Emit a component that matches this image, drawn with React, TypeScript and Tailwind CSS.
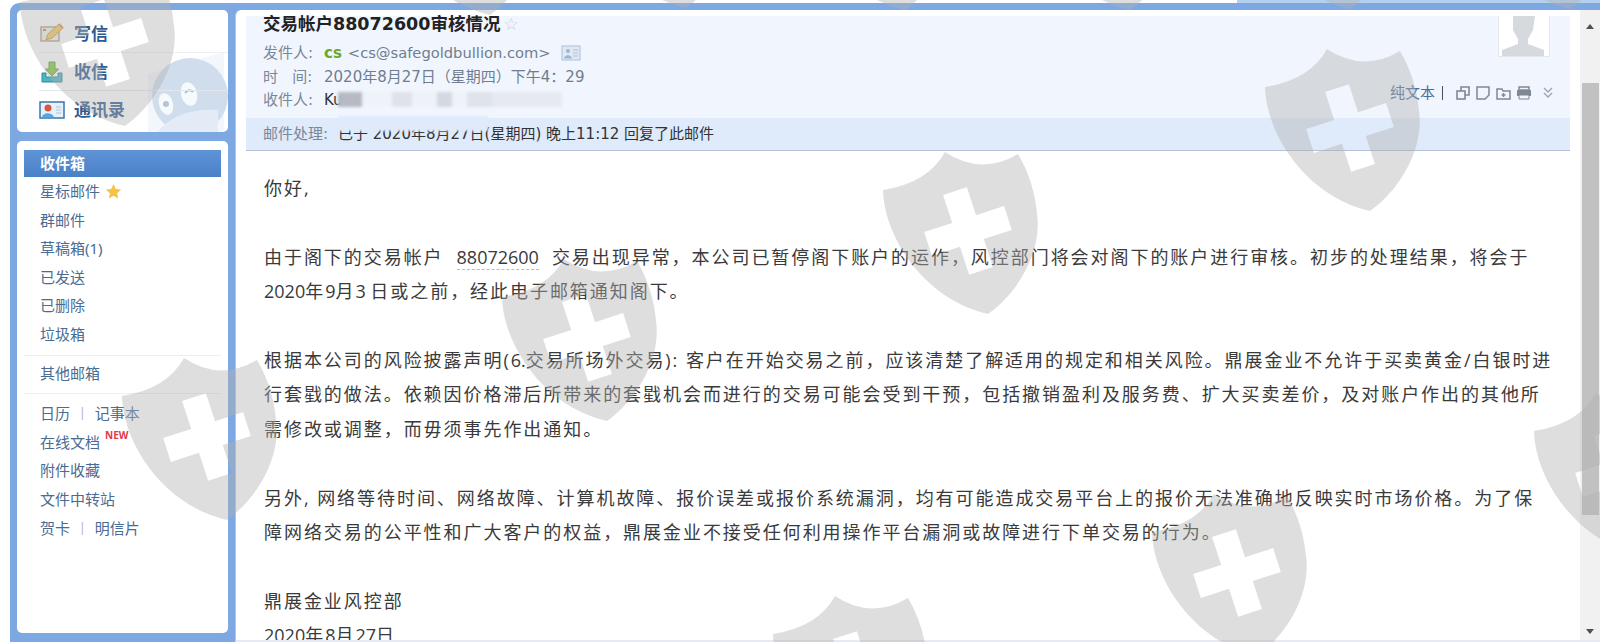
const shields: [number, number][] = [
  [105, 43], [968, 231], [587, 338], [207, 437], [1350, 128], [1619, 472], [1237, 573], [858, 675],
  [470, -68], [666, -75], [885, -73], [1110, -73], [1330, -74], [1550, -74],
];

// plus sign turned by the shield's tilt, cut out of the shield path
const crossPoints: [number, number][] = [
  [-12.5, -42], [12.5, -42], [12.5, -12.5], [42, -12.5], [42, 12.5], [12.5, 12.5],
  [12.5, 42], [-12.5, 42], [-12.5, 12.5], [-42, 12.5], [-42, -12.5], [-12.5, -12.5],
];
const tilt = (-18 * Math.PI) / 180;
const cross =
  "M" +
  crossPoints
    .map(([x, y]) => `${(x * Math.cos(tilt) - y * Math.sin(tilt)).toFixed(1)} ${(x * Math.sin(tilt) + y * Math.cos(tilt)).toFixed(1)}`)
    .join("L") +
  "Z";
const shieldPath = `M-23 -79 Q-40 -48 -85 -41 C-84 5 -45 68 20 83 C55 58 74 15 69 -17 Q66 -50 50 -77 Q13 -55 -23 -79Z${cross}`;

function Watermarks() {
  return (
    <svg aria-hidden="true" className="pointer-events-none absolute inset-0 h-[642px] w-[1600px]" viewBox="0 0 1600 642">
      {shields.map(([x, y]) => (
        <path key={`${x}-${y}`} transform={`translate(${x} ${y})`} d={shieldPath} fillRule="evenodd" fill="#b0b0b0" fillOpacity="0.42" />
      ))}
    </svg>
  );
}

function ComposeIcon() {
  return (
    <svg viewBox="0 0 26 24" className="h-[24px] w-[26px]" aria-hidden="true">
      <rect x="2" y="5" width="18" height="14" fill="#f3efe6" stroke="#a08d83" strokeWidth="1.2" />
      <path d="M4 8h3" stroke="#c2574e" strokeWidth="1.5" />
      <path d="M7 18l2-6L20 2l4 4-11 10z" fill="#f4c95d" stroke="#c89a35" />
      <path d="M20 2l4 4" stroke="#e0896f" strokeWidth="2" />
    </svg>
  );
}

function InboxIcon() {
  return (
    <svg viewBox="0 0 26 24" className="h-[24px] w-[26px]" aria-hidden="true">
      <path d="M3 13v9h20v-9h-4v4H7v-4z" fill="#4cb7c0" stroke="#35869d" />
      <path d="M10 2h6v7h3.5L13 16 6.500 9H10z" fill="#86c742" stroke="#5f9f2c" />
    </svg>
  );
}

function ContactIcon() {
  return (
    <svg viewBox="0 0 26 20" className="h-[20px] w-[26px]" aria-hidden="true">
      <rect x="1" y="2" width="24" height="16" fill="#e4f1fa" stroke="#3b76a8" strokeWidth="1.5" />
      <circle cx="9" cy="8" r="3.500" fill="#d8553f" />
      <path d="M3 17c1-5 10-5 12 0z" fill="#55a7dc" />
      <path d="M17 7h5M17 10h5M17 13h5" stroke="#a8c6dd" />
    </svg>
  );
}

function Penguin() {
  return (
    <svg aria-hidden="true" viewBox="0 0 80 80" className="absolute bottom-0 right-0 h-[80px] w-[80px]">
      <path d="M0 22L76 0v80H0z" fill="#f3f6fa" />
      <ellipse cx="42" cy="44" rx="38" ry="38" fill="#d0dded" />
      <ellipse cx="41" cy="42" rx="8" ry="12" fill="#f7fafc" transform="rotate(-15 41 42)" />
      <ellipse cx="18" cy="52" rx="7" ry="11" fill="#f7fafc" transform="rotate(-15 18 52)" />
      <path d="M37 41q4 -5 8 -1" fill="none" stroke="#a9bdd3" strokeWidth="2" />
      <circle cx="18" cy="52" r="3" fill="#b3c4d8" />
      <path d="M10 80q18 -24 60 -22v22z" fill="#e3ecf6" />
    </svg>
  );
}

function NavRow({ children }: { children: React.ReactNode }) {
  return <div className="flex h-[28.6px] items-center pl-[16px] text-[15px] text-[#4a6c92]">{children}</div>;
}

function Sidebar() {
  return (
    <div className="flex w-[225px] shrink-0 flex-col gap-[9px] px-[7px] pb-[9px]">
      <div className="relative h-[122px] overflow-hidden rounded-[5px] bg-white pl-[22px] pt-[6px]">
        <Penguin />
        <div className="relative flex h-[37px] items-center gap-[9px] border-b border-[#eceff3] text-[17px] font-bold text-[#2f5c8f]">
          <ComposeIcon />
          <span>写信</span>
        </div>
        <div className="relative flex h-[38px] items-center gap-[9px] border-b border-[#e3e6ea] text-[17px] font-bold text-[#2f5c8f]">
          <InboxIcon />
          <span>收信</span>
        </div>
        <div className="relative flex h-[38px] items-center gap-[9px] text-[17px] font-bold text-[#2f5c8f]">
          <ContactIcon />
          <span>通讯录</span>
        </div>
      </div>

      <div className="flex-1 rounded-[5px] bg-white px-[7px] pt-[9px]">
        <div className="flex h-[27px] items-center bg-gradient-to-b from-[#5f95d6] to-[#4a80c6] pl-[16px] text-[15px] font-bold text-white">
          收件箱
        </div>
        <div>
          <NavRow>
            星标邮件
            <svg viewBox="0 0 24 24" className="ml-[5px] h-[17px] w-[17px]" aria-hidden="true">
              <path d="M12 1.500l3.200 7 7.600.8-5.700 5.100 1.600 7.500-6.700-3.900-6.700 3.900 1.600-7.500L1.200 9.300l7.600-.8z" fill="#f6c445" />
            </svg>
          </NavRow>
          <NavRow>群邮件</NavRow>
          <NavRow>草稿箱(1)</NavRow>
          <NavRow>已发送</NavRow>
          <NavRow>已删除</NavRow>
          <NavRow>垃圾箱</NavRow>
        </div>
        <div className="mt-[6px] border-t border-[#eceef1] pt-[3px]">
          <NavRow>其他邮箱</NavRow>
        </div>
        <div className="mt-[6px] border-t border-[#eceef1] pt-[5px]">
          <NavRow>
            日历<span className="mx-[9px] text-[12px] text-[#a9b2bd]">|</span>记事本
          </NavRow>
          <NavRow>
            在线文档
            <span className="mb-[14px] ml-[5px] text-[10px] font-bold text-[#e2394a]">NEW</span>
          </NavRow>
          <NavRow>附件收藏</NavRow>
          <NavRow>文件中转站</NavRow>
          <NavRow>
            贺卡<span className="mx-[9px] text-[12px] text-[#a9b2bd]">|</span>明信片
          </NavRow>
        </div>
      </div>
    </div>
  );
}

function Tools() {
  return (
    <div className="mr-[17px] mt-[25px] flex items-center text-[#7f8893]">
      <span className="text-[15px] text-[#47709c]">纯文本</span>
      <span className="ml-[7px] h-[14px] w-px bg-[#44505e]" />
      <svg viewBox="0 0 14 14" className="ml-[13px] h-[14px] w-[14px]" fill="none" stroke="currentColor" strokeWidth="1.6" aria-hidden="true">
        <rect x="1" y="5" width="8" height="8" />
        <path d="M5 5V1h8v8H9" />
      </svg>
      <svg viewBox="0 0 14 14" className="ml-[6px] h-[14px] w-[14px]" fill="none" stroke="currentColor" strokeWidth="1.5" aria-hidden="true">
        <path d="M1 1h12v8l-4 4H1z" />
      </svg>
      <svg viewBox="0 0 15 14" className="ml-[6px] h-[14px] w-[15px]" fill="none" stroke="currentColor" strokeWidth="1.5" aria-hidden="true">
        <path d="M1 13V3h5l1 2h7v8z" />
        <path d="M7.500 7v4M5.500 9h4" />
      </svg>
      <svg viewBox="0 0 16 14" className="ml-[5px] h-[14px] w-[16px]" aria-hidden="true">
        <path d="M3 1h10v3H3z" fill="none" stroke="currentColor" strokeWidth="1.5" />
        <path d="M1 4h14v6H1z" fill="currentColor" />
        <path d="M3 9h10v4H3z" fill="#f1f6fe" stroke="currentColor" />
      </svg>
      <svg viewBox="0 0 10 12" className="ml-[11px] h-[12px] w-[10px]" fill="none" stroke="#9aa3ad" strokeWidth="1.3" aria-hidden="true">
        <path d="M1 1l4 4 4-4M1 6l4 4 4-4" />
      </svg>
    </div>
  );
}

function Header() {
  return (
    <div className="relative mx-[10px] mt-[6px] flex h-[135px] shrink-0 flex-col bg-[#f1f6fe] font-['DejaVu_Sans','Noto_Sans_CJK_SC',sans-serif]">
      <div className="flex flex-1">
        <div className="flex-1 pl-[17px]">
          <div className="flex h-[16px] items-center whitespace-nowrap text-[17.500px] font-bold leading-[16px] text-[#222]">
            <span>交易帐户88072600审核情况</span>
            <span className="ml-[3px] text-[17px] font-normal text-[#c9ced6]">☆</span>
          </div>
          <div className="mt-[9px] flex h-[24px] items-center text-[15px] text-[#7a8799]">
            <span className="w-[61px]">发件人:</span>
            <span className="font-bold text-[#6aa92c]">cs</span>
            <span className="ml-[6px] text-[14.700px] text-[#6f7d8e]">&lt;cs@safegoldbullion.com&gt;</span>
            <svg viewBox="0 0 20 16" className="ml-[10px] h-[16px] w-[20px]" aria-hidden="true">
              <rect x="1" y="1" width="18" height="14" fill="#dfe9f6" stroke="#a9bfdb" />
              <circle cx="7" cy="6" r="2" fill="#9fb4cf" />
              <path d="M3 13q4 -5 8 0zM12 5h5M12 8h5M12 11h5" fill="#9fb4cf" stroke="#9fb4cf" strokeWidth="0.8" />
            </svg>
          </div>
          <div className="flex h-[24px] items-center text-[15px] text-[#7a8799]">
            <span className="w-[61px]">时&nbsp;&nbsp;&nbsp;间:</span>
            <span className="text-[#6f7d8e]">2020年8月27日（星期四）下午4：29</span>
          </div>
          <div className="flex h-[23px] items-center text-[15px] text-[#7a8799]">
            <span className="w-[61px]">收件人:</span>
            <span className="text-[#333]">Ku</span>
          </div>
        </div>
        <div className="flex flex-col items-end">
          <div className="mr-[20px] flex h-[41px] w-[52px] items-end justify-center overflow-hidden border-x border-b border-[#e3e7ee] bg-white">
            <svg viewBox="0 0 50 40" className="h-[40px] w-[50px]" aria-hidden="true">
              <path d="M14 0h22l-2 14-5 9v5l16 6v6H3v-6l16-6v-5l-5-9z" fill="#d6d9de" />
            </svg>
          </div>
          <Tools />
        </div>
      </div>
      <div className="flex h-[33px] items-center border-b border-[#b4c2d6] bg-[#dfeafa] pl-[17px] text-[15px] text-[#7a8799]">
        <span className="w-[75px]">邮件处理:</span>
        <span className="text-[#333]">已于 2020年8月27日(星期四) 晚上11:12 回复了此邮件</span>
      </div>
      {/* blurred-out recipient address, painted over the original screenshot */}
      <div className="absolute left-[92px] top-[76px] flex h-[15px] w-[224px] blur-[1.5px]">
        <div className="w-[24px] bg-[#b6bac3]" />
        <div className="w-[30px] bg-[#eff2f8]" />
        <div className="w-[20px] bg-[#dfe2ea]" />
        <div className="w-[25px] bg-[#eef1f7]" />
        <div className="w-[15px] bg-[#d4d8e0]" />
        <div className="w-[15px] bg-[#eff2f8]" />
        <div className="w-[25px] bg-[#dfe3ea]" />
        <div className="w-[70px] bg-[#e6e9f0]" />
      </div>
      <div className="absolute left-[92px] top-[100px] h-[15px] w-[150px] bg-[#dfeafa] blur-[1px]" />
    </div>
  );
}

function Num({ children }: { children: React.ReactNode }) {
  return <span className="tracking-normal">{children}</span>;
}

function Line({ children }: { children?: React.ReactNode }) {
  return <div className="h-[34.4px] whitespace-nowrap leading-[34.4px]">{children}</div>;
}

function Body() {
  return (
    <div className="flex-1 overflow-hidden pl-[28px] pt-[20px] font-['Open_Sans','Noto_Sans_CJK_SC',sans-serif] text-[18px] tracking-[1.95px] text-[#3a3a3a]">
      <Line>你好,</Line>
      <Line />
      <Line>
        由于阁下的交易帐户
        <span className="mx-[13px] border-b border-dashed border-[#bbb] tracking-normal">88072600</span>
        交易出现异常，本公司已暂停阁下账户的运作，风控部门将会对阁下的账户进行审核。初步的处理结果，将会于
      </Line>
      <Line>
        <Num>2020</Num>年<Num>9</Num>月<Num>3 </Num>日或之前，经此电子邮箱通知阁下。
      </Line>
      <Line />
      <Line>
        根据本公司的风险披露声明(<Num>6.</Num>交易所场外交易): 客户在开始交易之前，应该清楚了解适用的规定和相关风险。鼎展金业不允许于买卖黄金/白银时进
      </Line>
      <Line>行套戥的做法。依赖因价格滞后所带来的套戥机会而进行的交易可能会受到干预，包括撤销盈利及服务费、扩大买卖差价，及对账户作出的其他所</Line>
      <Line>需修改或调整，而毋须事先作出通知。</Line>
      <Line />
      <Line>另外, 网络等待时间、网络故障、计算机故障、报价误差或报价系统漏洞，均有可能造成交易平台上的报价无法准确地反映实时市场价格。为了保</Line>
      <Line>障网络交易的公平性和广大客户的权益，鼎展金业不接受任何利用操作平台漏洞或故障进行下单交易的行为。</Line>
      <Line />
      <Line>鼎展金业风控部</Line>
      <Line>
        <Num>2020</Num>年<Num>8</Num>月<Num>27</Num>日
      </Line>
    </div>
  );
}

function Scrollbar() {
  return (
    <div className="flex w-[20px] shrink-0 flex-col items-center bg-[#f1f1f1] pt-[14px]">
      <div className="h-0 w-0 border-x-[4px] border-b-[5px] border-x-transparent border-b-[#505050]" />
      <div className="mt-[54px] h-[432px] w-[17px] bg-[#c1c1c1]" />
      <div className="mt-auto mb-[6px] h-0 w-0 border-x-[4px] border-t-[5px] border-x-transparent border-t-[#505050]" />
    </div>
  );
}

export default function App() {
  return (
    <div className="relative flex h-[642px] w-[1600px] flex-col overflow-hidden bg-white font-['Noto_Sans','Noto_Sans_CJK_SC',sans-serif]">
      <div className="flex h-[3px] shrink-0">
        <div className="w-[1237px] bg-white" />
        <div className="flex-1 bg-[#b4d0ef]" />
      </div>
      <div className="ml-[10px] flex min-h-0 flex-1 rounded-tl-[9px] bg-[#7ea8e2] pt-[7px]">
        <Sidebar />
        <div className="flex min-w-0 flex-1 rounded-tl-[6px] border-b-2 border-l border-[#e4ebf2] border-l-[#a9c8ee] bg-white">
          <div className="flex min-w-0 flex-1 flex-col">
            <Header />
            <Body />
          </div>
          <Scrollbar />
        </div>
      </div>
      <Watermarks />
    </div>
  );
}
